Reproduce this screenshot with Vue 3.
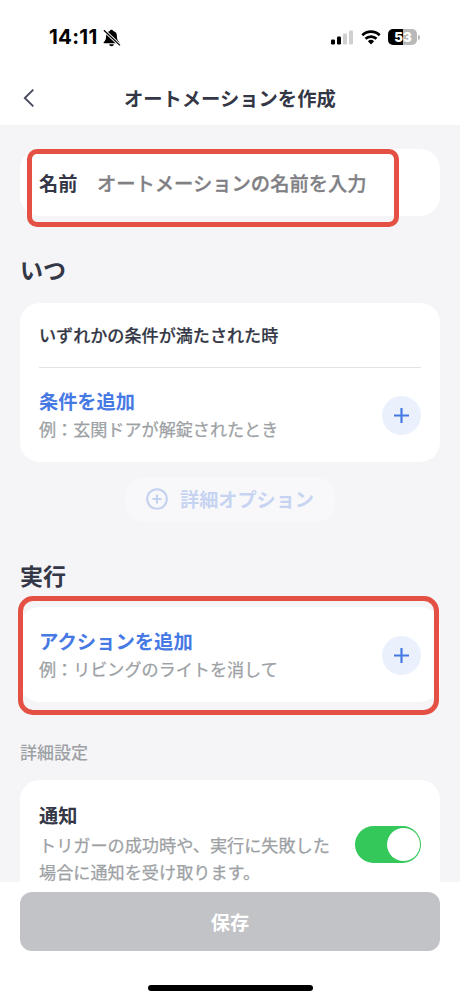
<script setup>
import { ref } from 'vue'

const name = ref('')
const notify = ref(true)
</script>

<template>
  <div class="screen">
    <header class="top">
      <div class="status">
        <div class="clock">
          <span class="time">14:11</span>
          <svg class="bell" width="18" height="18" viewBox="0 0 18 18">
            <path d="M8.500 .8c-1 0-1.600.6-1.700 1.300C4.200 2.800 3.100 4.700 3.100 7c0 3.400-.8 4.700-2.300 6.100-.5.500-.2 1.200.5 1.200h14.400c.7 0 1-.7.5-1.200-1.500-1.400-2.300-2.700-2.300-6.100 0-2.300-1.100-4.200-3.700-4.900C10.100 1.400 9.500.8 8.500.8z" />
            <path d="M6.100 15.200h4.800c-.2 1.200-1.200 2-2.400 2s-2.200-.8-2.400-2z" />
            <path d="M.9 1.200 17 16.400" stroke="#fff" stroke-width="3" />
            <path d="M.9 1.200 17 16.400" stroke="#000" stroke-width="1.300" />
          </svg>
        </div>
        <div class="indicators">
          <svg width="23" height="15" viewBox="0 0 23 15">
            <rect x="0" y="9.500" width="4" height="5" rx="1.200" />
            <rect x="6" y="6.500" width="4" height="8" rx="1.200" />
            <rect x="12" y="3.500" width="4" height="11" rx="1.200" fill="#d0d0d0" />
            <rect x="18" y=".5" width="4" height="14" rx="1.200" fill="#d0d0d0" />
          </svg>
          <svg class="wifi" width="20" height="15" viewBox="0 0 20 15">
            <g fill="none" stroke="#000" stroke-width="2.700">
              <path d="M1.300 5.300a12.300 12.300 0 0 1 17.400 0" />
              <path d="M4.500 8.800a7.800 7.800 0 0 1 11 0" />
            </g>
            <path d="M6.900 11.300a4.500 4.500 0 0 1 6.200 0L10 14.400z" />
          </svg>
          <div class="battery"><span class="level"><b>5</b></span><span class="rest"><b>3</b></span><i></i></div>
        </div>
      </div>
      <div class="nav">
        <svg class="back" width="12" height="20" viewBox="0 0 12 20">
          <path d="M10.300 1.600 1.800 10l8.500 8.400" fill="none" stroke="#44465a" stroke-width="1.800" />
        </svg>
        <h1>オートメーションを作成</h1>
      </div>
    </header>

    <main>
      <section class="card name-card">
        <label for="name">名前</label>
        <input id="name" v-model="name" type="text" placeholder="オートメーションの名前を入力" />
        <div class="mark mark-name"></div>
      </section>

      <h2 class="when">いつ</h2>
      <section class="card when-card">
        <div class="rule">いずれかの条件が満たされた時</div>
        <div class="row">
          <div>
            <div class="link">条件を追加</div>
            <div class="hint">例：玄関ドアが解錠されたとき</div>
          </div>
          <button class="plus" aria-label="条件を追加">
            <svg width="15" height="15" viewBox="0 0 15 15"><path d="M7.500 0v15M0 7.500h15" /></svg>
          </button>
        </div>
      </section>

      <button class="more">
        <svg width="22" height="22" viewBox="0 0 22 22">
          <circle cx="11" cy="11" r="9.800" />
          <path d="M11 6.500v9M6.500 11h9" />
        </svg>
        <span>詳細オプション</span>
      </button>

      <h2 class="run">実行</h2>
      <section class="card run-card">
        <div class="row">
          <div>
            <div class="link action">アクションを追加</div>
            <div class="hint">例：リビングのライトを消して</div>
          </div>
          <button class="plus" aria-label="アクションを追加">
            <svg width="15" height="15" viewBox="0 0 15 15"><path d="M7.500 0v15M0 7.500h15" /></svg>
          </button>
        </div>
        <div class="mark mark-run"></div>
      </section>

      <h3>詳細設定</h3>
      <section class="card notify-card">
        <div>
          <div class="notify-title">通知</div>
          <p>トリガーの成功時や、実行に失敗した<br />場合に通知を受け取ります。</p>
        </div>
        <button class="toggle" :class="{ on: notify }" role="switch" :aria-checked="notify" aria-label="通知" @click="notify = !notify">
          <span></span>
        </button>
      </section>
    </main>

    <footer>
      <button class="save">保存</button>
      <div class="home"></div>
    </footer>
  </div>
</template>

<style>
body { margin: 0; background: #fff; }
</style>

<style scoped>
* { box-sizing: border-box; }
.screen {
  width: 460px;
  height: 1000px;
  overflow: hidden;
  display: flex;
  flex-direction: column;
  background: #fff;
  color: #343746;
  font-family: "Noto Sans CJK JP", sans-serif;
}
h1, h2, h3, p { margin: 0; }
button { border: 0; padding: 0; font-family: inherit; }

.top { height: 125px; flex: none; }
.status { height: 74px; display: flex; justify-content: space-between; padding: 0 43px 0 49px; }
.clock { display: flex; align-items: center; gap: 5px; color: #000; }
.time { font: 700 20.500px/24px Inter, sans-serif; letter-spacing: .25px; width: 49px; white-space: nowrap; }
.bell { margin-top: 1px; }
.indicators { display: flex; align-items: center; }
.wifi { margin: 0 7px 0 7px; }
.battery { position: relative; display: flex; width: 29px; height: 16px; font: 700 13px/16px Inter, sans-serif; color: #fff; }
.level { width: 15px; background: #000; border-radius: 5px 0 0 5px; text-align: right; }
.rest { width: 14px; background: #b9b9b9; border-radius: 0 5px 5px 0; }
.battery i { position: absolute; right: -3px; top: 6px; width: 2px; height: 5px; background: #b9b9b9; border-radius: 0 2px 2px 0; }
.nav { height: 48px; display: flex; align-items: center; padding-left: 23px; }
.back { flex: none; }
h1 { margin-left: 89px; font-size: 19.300px; line-height: 28px; font-weight: 700; white-space: nowrap; }

main { height: 757px; flex: none; background: #f5f5f8; padding: 24px 20px 0; }
.card { position: relative; background: #fff; border-radius: 20px; }
.name-card { height: 67px; display: flex; align-items: center; padding: 0 19px; }
.name-card label { width: 58px; flex: none; font-size: 19.200px; line-height: 28px; font-weight: 700; }
.name-card input {
  width: 290px; border: 0; outline: 0; padding: 0; background: transparent;
  font: 500 19.300px/28px "Noto Sans CJK JP", sans-serif;
}
.name-card input::placeholder { color: #808084; opacity: 1; -webkit-text-stroke: .3px #808084; }
.mark { position: absolute; border: 5px solid #e55045; pointer-events: none; }
.mark-name { left: 7px; top: 0; width: 372px; height: 78px; border-radius: 10px; }
.mark-run { left: -2px; top: -11px; width: 421px; height: 119px; border-radius: 15px; }

h2 { font-size: 23px; line-height: 34px; font-weight: 700; }
.when { margin-top: 36px; }
.when-card { margin-top: 17px; height: 159px; padding: 0 19px; }
.rule { height: 65px; padding-top: 19px; border-bottom: 1px solid #e2e3e6; font-size: 17.100px; line-height: 26px; font-weight: 500; -webkit-text-stroke: .2px currentColor; }
.row { display: flex; align-items: center; justify-content: space-between; height: 94px; }
.link { color: #4679e4; font-size: 19.200px; line-height: 28px; font-weight: 700; }
.action { font-size: 19.350px; }
.hint { color: #9da1a4; font-size: 17.100px; line-height: 28px; font-weight: 400; -webkit-text-stroke: .25px currentColor; }
.plus { width: 39px; height: 39px; border-radius: 50%; background: #eaf1fd; display: grid; place-items: center; }
.plus path { stroke: #4679e4; stroke-width: 2.200; fill: none; }

.more { margin: 15px auto 0; width: 210px; height: 45px; border-radius: 20px; background: #f8f8fa; display: flex; align-items: center; padding: 0 0 1px 21px; gap: 12px; color: #c6d4f1; font-size: 19.150px; line-height: 28px; font-weight: 700; white-space: nowrap; }
.more svg { fill: none; stroke: #c3d1f0; stroke-width: 2; flex: none; }

.run { margin-top: 36px; }
.run-card { margin-top: 15px; height: 95px; padding: 0 19px; }
.run-card .row { height: 96px; }
h3 { margin-top: 37px; color: #9da1a4; font-size: 17px; line-height: 26px; font-weight: 500; }
.notify-card { margin-top: 15px; height: 112px; padding: 21px 19px 0; border-radius: 20px 20px 0 0; display: flex; justify-content: space-between; }
.notify-title { font-size: 19.200px; line-height: 28px; font-weight: 700; }
.notify-card p { margin-top: 2px; color: #9da1a4; font-size: 17.150px; line-height: 27px; white-space: nowrap; -webkit-text-stroke: .25px currentColor; }
.toggle { width: 66px; height: 37px; margin-top: 25px; flex: none; border-radius: 19px; background: #c5c6ca; padding: 2px; display: flex; }
.toggle span { width: 33px; height: 33px; border-radius: 50%; background: #fff; }
.toggle.on { background: #34c759; justify-content: flex-end; }
.toggle.on span { margin-right: -1px; }

footer { flex: 1; padding: 10px 20px 0; display: flex; flex-direction: column; align-items: center; }
.save { position: relative; width: 420px; height: 59px; flex: none; border-radius: 12px; background: #c2c3c7; color: #fff; font-size: 19.200px; line-height: 28px; font-weight: 700; }
.home { margin-top: 34px; width: 165px; height: 6px; border-radius: 3px; background: #000; }
</style>
